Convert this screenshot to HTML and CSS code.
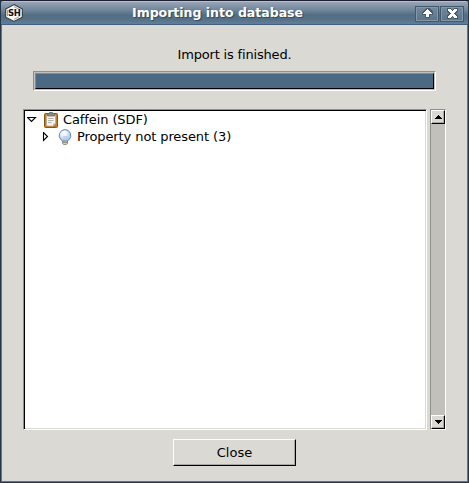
FILE: index.html
```html
<!DOCTYPE html>
<html lang="en">
<head>
<meta charset="utf-8">
<title>Importing into database</title>
<link rel="stylesheet" href="styles.css">
</head>
<body>
<div class="window">
  <header class="titlebar">
    <svg class="logo" width="18" height="18" viewBox="0 0 18 18">
      <path d="M9 .6 17.300 5v8.200L9 17.400.7 13.200V5z" fill="#f8f8f6" stroke="#35393c" stroke-width="1.1"/>
      <path d="M2.500 6v6M9 2.600l5.500 2.900M9 15.400l5.500-2.900" fill="none" stroke="#777" stroke-width=".7"/>
      <text x="9.200" y="12.200" text-anchor="middle" class="logo-text">SH</text>
    </svg>
    <h1 class="title">Importing into database</h1>
    <button class="tool" aria-label="Shade"><svg width="11" height="11" viewBox="0 0 11 11" shape-rendering="crispEdges"><path class="shadow" d="M4 0h3l4 4v3H8v3H3V7H0V4z"/><path class="glyph" d="M5 1h1v1h1v1h1v1h1v1h1v1H7v3H4V6H1V5h1V4h1V3h1V2h1z"/></svg></button>
    <button class="tool" aria-label="Close window"><svg width="11" height="11" viewBox="0 0 11 11" shape-rendering="crispEdges"><path class="shadow" d="M0 0h4l1 2h1l1-2h4v4L9 5v1l2 1v4H7L6 9H5l-1 2H0V7l2-1V5L0 4z"/><path class="glyph" d="M1 1h3v1h1v1h1V2h1V1h3v2H9v1H8v1H7v1h1v1h1v1h1v2H7V9H6V8H5v1H4v1H1V8h1V7h1V6h1V5H3V4H2V3H1z"/></svg></button>
  </header>
  <main class="content">
    <p class="status">Import is finished.</p>
    <div class="progress"><div class="bar"></div></div>
    <div class="tree">
      <div class="view">
        <div class="row">
          <svg class="arrow" width="10" height="10" viewBox="0 0 10 10"><path d="M.5 2.500h8L4.500 6.500z" fill="#fff" stroke="#000" stroke-width="1.1"/></svg>
          <svg class="icon" width="16" height="16" viewBox="0 0 16 16">
            <rect x="1.500" y="1.500" width="13" height="14" rx="1" fill="#c17d25" stroke="#8f5902"/>
            <path d="M3.500 3h9v8.500l-2.500 2.500H3.500z" fill="#f4f4f2" stroke="#aaa" stroke-width=".6"/>
            <path d="M10 14v-2.500h2.500z" fill="#babdb6"/>
            <path d="M5 6.500h5.500M5 8.500h5.500M5 10.500h3.500" stroke="#b0b2ae"/>
            <path d="M4.500 4V1.500h2V.5h3v1h2V4z" fill="#888a85" stroke="#666862" stroke-width=".8"/>
          </svg>
          <span>Caffein (SDF)</span>
        </div>
        <div class="row child">
          <svg class="arrow" width="10" height="10" viewBox="0 0 10 10"><path d="M2.500.5v8L6.500 4.500z" fill="#fff" stroke="#000" stroke-width="1.1"/></svg>
          <svg class="icon" width="16" height="16" viewBox="0 0 16 16">
            <defs><radialGradient id="glass" cx=".4" cy=".35"><stop offset="0" stop-color="#fff"/><stop offset=".5" stop-color="#e8f2fd"/><stop offset="1" stop-color="#b2d0f0"/></radialGradient></defs>
            <path d="M5.500 11h5v3.300l-1.200 1.300H6.700l-1.200-1.300z" fill="#e4d27c" stroke="#75756c" stroke-width=".8"/>
            <path d="M8 .5a6 6 0 0 1 4 10.300L10.300 12H5.700L4 10.800A6 6 0 0 1 8 .5z" fill="url(#glass)" stroke="#5f7ea5" stroke-width=".9"/>
            <path d="M6 7l1 1 1-1 1 1 1-1M7 8v3M9 8v3" fill="none" stroke="#a9bfdb" stroke-width=".6"/>
            <path d="M5.500 13.500h5" stroke="#8b8760" stroke-width=".8"/>
          </svg>
          <span>Property not present (3)</span>
        </div>
      </div>
      <div class="scroll">
        <div class="step"><svg width="7" height="4" viewBox="0 0 7 4" shape-rendering="crispEdges"><path d="M3 0h1v1h1v1h1v1h1v1H0V3h1V2h1V1h1z"/></svg></div>
        <div class="step"><svg width="7" height="4" viewBox="0 0 7 4" shape-rendering="crispEdges"><path d="M0 0h7v1H6v1H5v1H4v1H3V3H2V2H1V1H0z"/></svg></div>
      </div>
    </div>
    <button class="close">Close</button>
  </main>
</div>
</body>
</html>
```

FILE: styles.css
```css
* { box-sizing: border-box; }
body {
  margin: 0;
  background: #25364a;
  font: 13px/17px "DejaVu Sans", sans-serif;
  color: #000;
}
svg { display: block; flex: none; }
button { font: inherit; color: inherit; padding: 0; border-radius: 0; }
.window {
  width: 469px;
  height: 483px;
  display: flex;
  flex-direction: column;
  border: 1px solid #25364a;
  border-top-color: #1c2030;
  border-radius: 3px 3px 0 0;
}
.titlebar {
  height: 24px;
  flex: none;
  display: flex;
  align-items: center;
  gap: 1px;
  padding: 0 4px 0 4px;
  border-top: 1px solid #b5bfcc;
  border-bottom: 1px solid #41607f;
  border-radius: 2px 2px 0 0;
  background: linear-gradient(#98a5b6, #71879c 35%, #536d83 60%, #577188 80%, #627e98);
}
.logo-text { font: bold 8.5px "DejaVu Sans", sans-serif; letter-spacing: -.3px; fill: #111; }
.title {
  flex: 1;
  margin: -1px 0 0 -3px;
  text-align: center;
  font-size: 12.5px;
  line-height: 17px;
  color: #fff;
  text-shadow: 1px 1px 1px #34485a;
}
.tool {
  width: 24px;
  height: 16px;
  margin-top: 1px;
  display: flex;
  align-items: center;
  justify-content: center;
  border: 1px solid #42586b;
  background: linear-gradient(#74899c, #5a748a);
  box-shadow: inset 0 0 0 1px #8498aa;
}
.shadow { fill: #435b6f; }
.glyph { fill: #fff; }
.content {
  flex: 1;
  display: flex;
  flex-direction: column;
  padding: 21px 21px 0 21px;
  background: #dad9d4;
  border: solid #487ba8;
  border-width: 0 1px 1px;
}
.status { margin: 0; height: 25px; text-align: center; letter-spacing: -.18px; }
.progress {
  width: 403px;
  height: 20px;
  margin: 0 0 0 10px;
  border: 1px solid #908f8b;
  border-right-color: #fff;
  border-bottom-color: #fff;
  padding: 1px;
  background: #c1bfba;
}
.bar {
  height: 16px;
  background: #4b6983;
  border: 1px solid #6d90ae;
  border-right-color: #000;
  border-bottom-color: #000;
}
.tree { display: flex; height: 321px; margin-top: 18px; width: 423px; }
.view {
  width: 404px;
  background: #fff;
  border: 1px solid;
  border-color: #908f8b #fff #fff #908f8b;
  box-shadow: inset 1px 1px #000, inset -1px -1px #dad9d4;
  padding: 1px 0 0 3px;
}
.row { display: flex; align-items: center; height: 17px; letter-spacing: -.1px; }
.child { padding-left: 14px; }
.icon { margin: 0 4px 0 6px; }
.scroll {
  width: 16px;
  margin-left: 3px;
  display: flex;
  flex-direction: column;
  justify-content: space-between;
  background: #c1c0bb;
  border: 1px solid;
  border-color: #908f8b #fff #fff #908f8b;
}
.step {
  height: 14px;
  display: flex;
  align-items: center;
  justify-content: center;
  background: #dad9d4;
  border: 1px solid;
  border-color: #fff #000 #000 #fff;
  box-shadow: inset -1px -1px #a9a8a4;
}
.close {
  width: 123px;
  height: 27px;
  margin: 9px 0 0 150px;
  background: #dad9d4;
  border: 1px solid;
  border-color: #fff #000 #000 #fff;
  box-shadow: inset -1px -1px #a9a8a4;
}
```
